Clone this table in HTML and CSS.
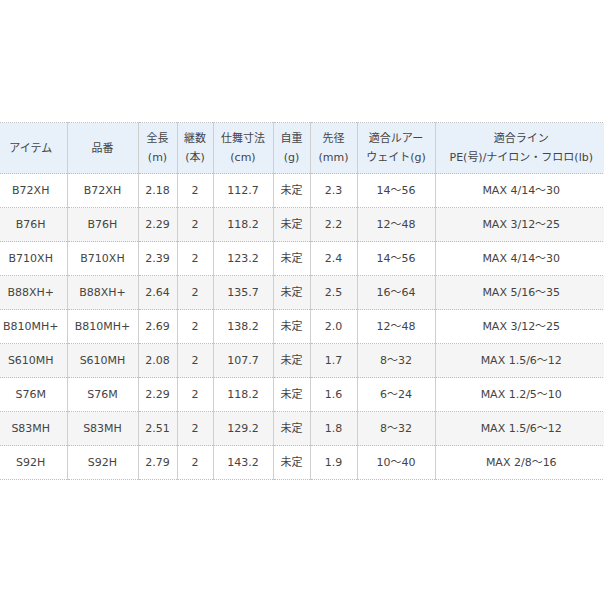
FILE: index.html
```html
<!DOCTYPE html>
<html lang="ja">
<head>
<meta charset="utf-8">
<link rel="stylesheet" href="styles.css">
</head>
<body>
<div class="wrap">
<table class="spec">
<colgroup>
<col class="c1"><col class="c2"><col class="c3"><col class="c4"><col class="c5"><col class="c6"><col class="c7"><col class="c8"><col class="c9">
</colgroup>
<thead>
<tr>
<th>アイテム</th><th>品番</th><th>全長<br>(m)</th><th>継数<br>(本)</th><th>仕舞寸法<br>(cm)</th><th>自重<br>(g)</th><th>先径<br>(mm)</th><th>適合ルアー<br>ウェイト(g)</th><th>適合ライン<br>PE(号)/ナイロン・フロロ(lb)</th>
</tr>
</thead>
<tbody>
<tr><td>B72XH</td><td>B72XH</td><td>2.18</td><td>2</td><td>112.7</td><td>未定</td><td>2.3</td><td>14～56</td><td>MAX 4/14～30</td></tr>
<tr><td>B76H</td><td>B76H</td><td>2.29</td><td>2</td><td>118.2</td><td>未定</td><td>2.2</td><td>12～48</td><td>MAX 3/12～25</td></tr>
<tr><td>B710XH</td><td>B710XH</td><td>2.39</td><td>2</td><td>123.2</td><td>未定</td><td>2.4</td><td>14～56</td><td>MAX 4/14～30</td></tr>
<tr><td>B88XH+</td><td>B88XH+</td><td>2.64</td><td>2</td><td>135.7</td><td>未定</td><td>2.5</td><td>16～64</td><td>MAX 5/16～35</td></tr>
<tr><td>B810MH+</td><td>B810MH+</td><td>2.69</td><td>2</td><td>138.2</td><td>未定</td><td>2.0</td><td>12～48</td><td>MAX 3/12～25</td></tr>
<tr><td>S610MH</td><td>S610MH</td><td>2.08</td><td>2</td><td>107.7</td><td>未定</td><td>1.7</td><td>8～32</td><td>MAX 1.5/6～12</td></tr>
<tr><td>S76M</td><td>S76M</td><td>2.29</td><td>2</td><td>118.2</td><td>未定</td><td>1.6</td><td>6～24</td><td>MAX 1.2/5～10</td></tr>
<tr><td>S83MH</td><td>S83MH</td><td>2.51</td><td>2</td><td>129.2</td><td>未定</td><td>1.8</td><td>8～32</td><td>MAX 1.5/6～12</td></tr>
<tr><td>S92H</td><td>S92H</td><td>2.79</td><td>2</td><td>143.2</td><td>未定</td><td>1.9</td><td>10～40</td><td>MAX 2/8～16</td></tr>
</tbody>
</table>
</div>
</body>
</html>
```
FILE: styles.css
```css
html, body {
  margin: 0;
  padding: 0;
  background: #fff;
}
.wrap {
  padding-top: 122px;
  overflow: hidden;
  width: 604px;
}
.spec {
  margin-left: -5px;
  width: 612px;
  table-layout: fixed;
  border-collapse: collapse;
  font-family: "DejaVu Sans", "Noto Sans CJK JP", sans-serif;
  font-size: 11px;
  color: #444;
}
.c1 { width: 72px; }
.c2 { width: 71px; }
.c3 { width: 39px; }
.c4 { width: 36px; }
.c5 { width: 60px; }
.c6 { width: 37px; }
.c7 { width: 47px; }
.c8 { width: 78px; }
.c9 { width: 172px; }
.spec th, .spec td {
  padding: 0;
  text-align: center;
  vertical-align: middle;
  border-left: 1px solid #cfcfcf;
  border-top: 1px dotted #bdbdbd;
  border-bottom: 1px dotted #bdbdbd;
  white-space: nowrap;
}
.spec th:first-child, .spec td:first-child {
  border-left: none;
}
.spec th {
  background: #e8f0fa;
  font-weight: normal;
  height: 50px;
  line-height: 19px;
}
.spec td {
  height: 33px;
  line-height: 16px;
}
.spec tbody tr:nth-child(even) td {
  background: #f5f5f5;
}
```
